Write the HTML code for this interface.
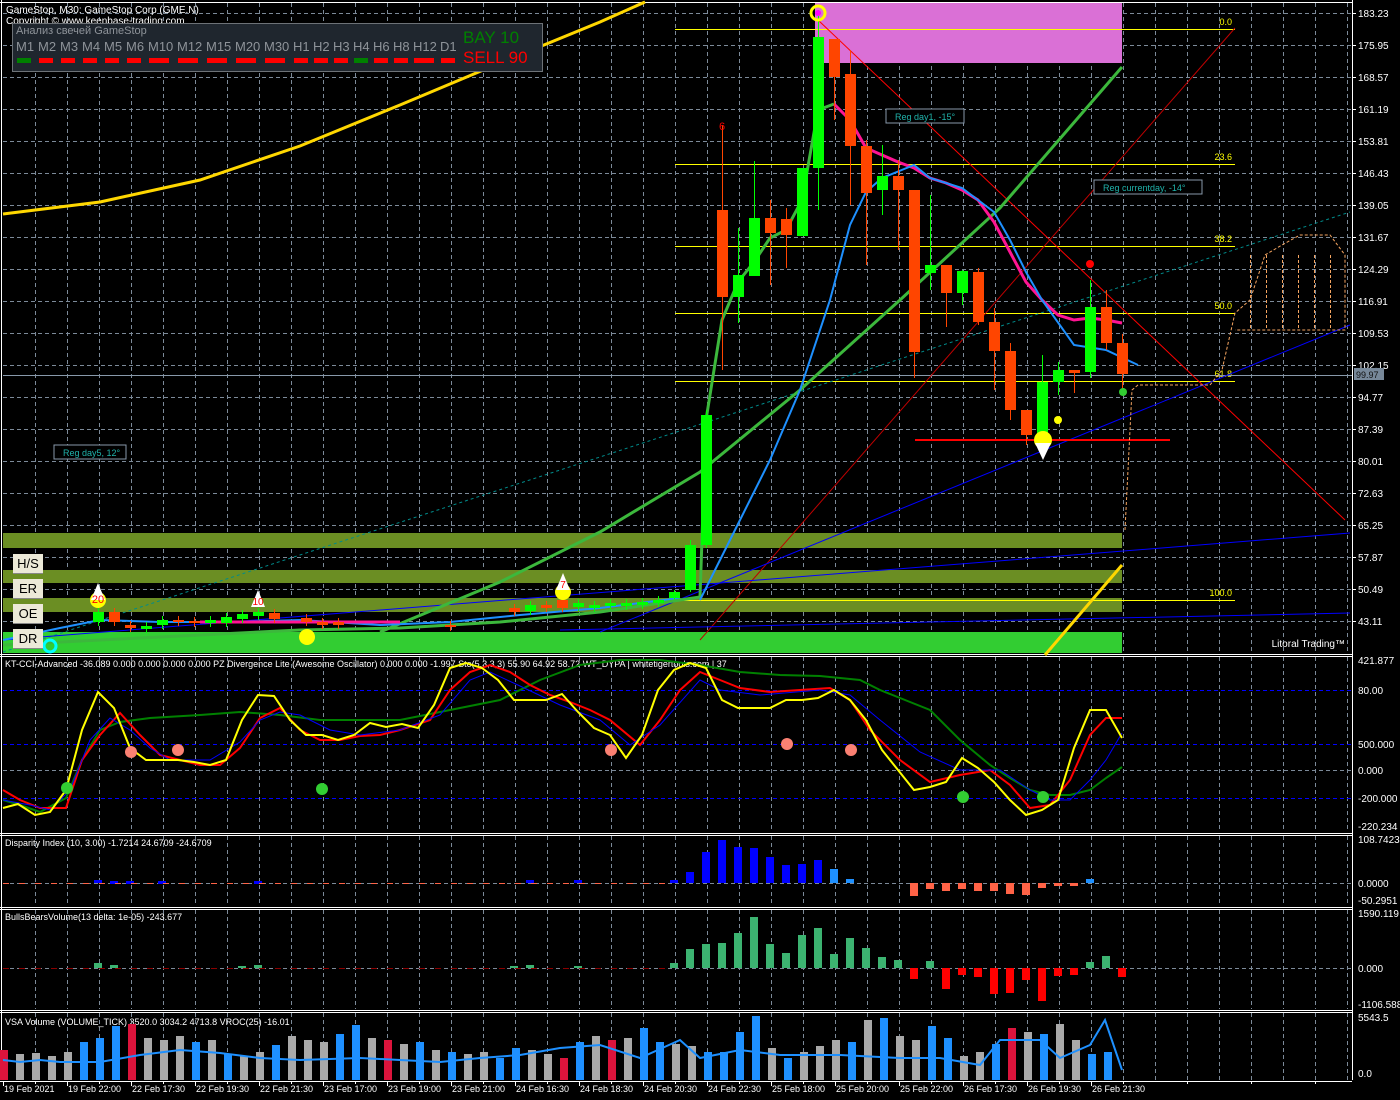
<!DOCTYPE html>
<html><head><meta charset="utf-8">
<style>
html,body{margin:0;padding:0;background:#000;width:1400px;height:1100px;overflow:hidden}
svg{display:block}
text{font-family:"Liberation Sans","Noto Sans CJK JP",sans-serif;}
</style></head>
<body>
<svg id="s" width="1400" height="1100" xmlns="http://www.w3.org/2000/svg"></svg>
<script>
var o='';
function a(s){o+=s;}
function L(x1,y1,x2,y2,c,w,d){if(y1==y2&&(w||1)==1){y1+=0.5;y2+=0.5;}if(x1==x2&&(w||1)==1){x1+=0.5;x2+=0.5;}a('<line x1="'+x1+'" y1="'+y1+'" x2="'+x2+'" y2="'+y2+'" stroke="'+c+'" stroke-width="'+(w||1)+'"'+(d?' stroke-dasharray="'+d+'"':'')+'/>');}
function R(x,y,w,h,c){a('<rect x="'+x+'" y="'+y+'" width="'+w+'" height="'+h+'" fill="'+c+'"/>');}
function P(pts,c,w,d){a('<polyline points="'+pts+'" fill="none" stroke="'+c+'" stroke-width="'+(w||1)+'"'+(d?' stroke-dasharray="'+d+'"':'')+'/>');}
function T(x,y,t,c,s,an){a('<text x="'+x+'" y="'+y+'" fill="'+c+'" font-size="'+(s||10)+'"'+(an?' text-anchor="'+an+'"':'')+'>'+t+'</text>');}
var G='#7c8a99';
var panels=[[3,653],[657,832],[836,906],[910,1009],[1013,1080]];
panels.forEach(function(p){
 for(var x=35;x<1352;x+=32)L(x,p[0],x,p[1],G,1,'4,3');
 L(0,p[0]-1,1352,p[0]-1,'#fff',1);L(0,p[1]+1,1352,p[1]+1,'#fff',1);
});
L(1352,0,1352,1080,'#fff',1);L(1,0,1,1080,'#fff',1);
var prices=['183.23','175.95','168.57','161.19','153.81','146.43','139.05','131.67','124.29','116.91','109.53','102.15','94.77','87.39','80.01','72.63','65.25','57.87','50.49','43.11'];
for(var i=0;i<20;i++){var y=13+32*i;L(3,y,1352,y,G,1,'4,3');L(1352,y,1356,y,'#fff');T(1358,y+4,prices[i],'#fff',10);}
R(3,533,1119,15,'#6b8e23');R(3,570,1119,13,'#6b8e23');R(3,598,1119,14,'#6b8e23');R(3,632,1119,21,'#32cd32');
R(815,3,307,60,'#da70d6');
[[29,'0.0'],[164,'23.6'],[246,'38.2'],[313,'50.0'],[381,'61.8'],[600,'100.0']].forEach(function(f){L(675,f[0],1235,f[0],'#ffff00',1);T(1232,f[0]-4,f[1],'#ffff00',9,'end');});
L(3,375,1352,375,'#8899aa',1);
R(1354,368,30,12,'#778899');T(1356,378,'99.97','#111',9);
L(818,20,1345,520,'#ff0000',1);L(700,640,1235,28,'#c00000',1);
L(3,652,1350,212,'#008b8b',1,'3,3');
L(600,632,1350,325,'#0000ff',1);L(3,640,1350,533,'#0000ff',1);L(560,630,1350,613,'#0000ff',1);
L(915,440,1170,440,'#ff0000',2);
P('3,214 100,202 200,180 300,146 400,105 500,63 600,22 645,2','#ffd700',3);
P('1045,655 1122,565','#ffd700',3);
P('380,632 500,582 600,532 700,472 800,390 900,300 1000,208 1122,67','#3cb83c',3);
P('3,640 60,628 100,620 160,622 230,622 300,620 380,625 450,622 520,615 600,608 680,598','#1e90ff',2);
P('3,645 100,640 200,635 300,630 400,628 500,622 600,612 680,600 700,597 706,420 722,320 738,282 754,262 770,238 786,230 802,200 818,110 834,104','#3cb83c',3);
P('200,622 400,622','#ff1493',3);
P('834,104 850,120 866,148 882,155 898,162 914,168 930,178 946,183 962,190 978,200 994,222 1010,252 1026,282 1042,300 1058,315 1074,320 1090,318 1106,320 1122,323','#ff1493',3);
P('700,600 740,520 770,460 800,390 830,300 850,225 866,192 882,178 914,165 930,178 962,188 994,212 1010,240 1026,272 1042,300 1074,345 1106,350 1138,365','#1e90ff',2);
P('1125,530 1132,390 1138,385 1210,385 1222,370 1235,313 1250,300 1265,255 1282,245 1300,235 1330,235 1345,255 1345,330 1235,330','#f4a460',1,'3,2');
for(var x=1250;x<1345;x+=16)L(x,255,x,330,'#f4a460',1,'3,2');
var C=[[674,598,592,590,600],[690,590,545,540,592],[706,545,415,410,548],[722,210,297,125,370],[738,297,275,228,323],[754,276,218,161,276],[770,218,233,200,285],[786,219,235,208,268],[802,236,168,168,236],[818,168,37,10,210],[834,39,77,39,120],[850,74,146,50,205],[866,146,193,140,265],[882,190,176,145,215],[898,176,190,160,250],[914,190,352,190,378],[930,273,265,195,290],[946,265,293,265,327],[962,293,271,270,305],[978,272,322,268,325],[994,322,351,308,390],[1010,351,410,343,420],[1026,410,435,410,445],[1042,435,382,355,440],[1058,382,370,362,395],[1074,370,373,370,393],[1090,372,307,280,378],[1106,307,343,290,350],[1122,343,374,334,390]];
C.forEach(function(c){var up=c[2]<c[1];var col=up?'#00ff00':'#ff4500';L(c[0],c[3],c[0],c[4],col,1);var t=Math.min(c[1],c[2]),h=Math.max(2,Math.abs(c[1]-c[2]));R(c[0]-5,t,11,h,col);});
var sc=[[98,'#00ff00',612,10],[114,'#ff4500',612,10],[130,'#ff4500',625,3],[146,'#00ff00',626,3],[162,'#00ff00',620,5],[178,'#ff4500',620,2],[194,'#ff4500',621,2],[210,'#00ff00',620,3],[226,'#00ff00',617,6],[242,'#00ff00',614,5],[258,'#00ff00',612,4],[274,'#ff4500',613,6],[306,'#ff4500',618,4],[322,'#ff4500',622,3],[338,'#ff4500',622,3],[450,'#ff4500',625,2],[514,'#ff4500',608,4],[530,'#00ff00',605,6],[546,'#ff4500',605,3],[562,'#ff4500',600,8],[578,'#00ff00',603,4],[594,'#00ff00',605,3],[610,'#00ff00',603,3],[626,'#00ff00',603,3],[642,'#00ff00',602,3],[658,'#00ff00',600,3]];
sc.forEach(function(c){R(c[0]-5,c[2],11,c[3],c[1]);L(c[0],c[2]-4,c[0],c[2]+c[3]+4,c[1]);});
a('<circle cx="818" cy="13" r="7" fill="none" stroke="#ffff00" stroke-width="3"/><circle cx="818" cy="13" r="3" fill="#ff00ff"/>');
a('<circle cx="1090" cy="264" r="4" fill="#ff0000"/><circle cx="1123" cy="392" r="4" fill="#32cd32"/><circle cx="1058" cy="420" r="4" fill="#ffff00"/><circle cx="1043" cy="440" r="9" fill="#ffff00"/>');
a('<polygon points="1035,443 1051,443 1043,460" fill="#fff"/>');
a('<circle cx="98" cy="600" r="8" fill="#ffff00"/><polygon points="98,583 91,600 105,600" fill="#fff"/>');
a('<circle cx="563" cy="592" r="8" fill="#ffff00"/><polygon points="563,573 556,590 570,590" fill="#fff"/>');
a('<polygon points="258,590 251,607 265,607" fill="#fff"/><circle cx="307" cy="637" r="8" fill="#ffff00"/><circle cx="50" cy="646" r="6" fill="none" stroke="#00ffff" stroke-width="3"/>');
T(98,603,'20','#ff0000',11,'middle');T(258,605,'10','#ff0000',10,'middle');T(563,588,'7','#ff0000',10,'middle');T(722,130,'6','#ff0000',11,'middle');
a('<rect x="886" y="109" width="78" height="14" fill="#000" stroke="#8899aa"/>');T(895,120,'Reg day1, -15°','#20b2aa',9);
a('<rect x="1094" y="180" width="108" height="14" fill="#000" stroke="#8899aa"/>');T(1103,191,'Reg currentday, -14°','#20b2aa',9);
a('<rect x="54" y="445" width="72" height="14" fill="#000" stroke="#8899aa"/>');T(63,456,'Reg day5, 12°','#20b2aa',9);
T(1345,647,'Litoral Trading™','#fff',10,'end');
['H/S','ER','OE','DR'].forEach(function(b,i){var y=554+25*i;R(13,y,30,19,'#ece9d8');L(13,y+19,43,y+19,'#888');T(28,y+14,b,'#000',13,'middle');});
T(6,13,'GameStop, M30:  GameStop Corp (GME.N)','#fff',10);T(6,24,'Copyright © www.keenbase-trading.com','#fff',10);
a('<rect x="12.5" y="23.5" width="530" height="48" fill="#1f262e" stroke="#6d7277"/>');
T(16,34,'Анализ свечей GameStop','#8e9399',11);
var tf=['M1','M2','M3','M4','M5','M6','M10','M12','M15','M20','M30','H1','H2','H3','H4','H6','H8','H12','D1'];
var xs=[16,38,60,82,104,126,148,177,206,235,264,293,313,333,353,373,393,413,440];
tf.forEach(function(t,i){T(xs[i],51,t,'#8e9399',13);var w=t.length>2?20:14;R(xs[i]+1,58,w,5,(i==0||i==14)?'#008000':'#ff0000');});
T(463,43,'BAY   10','#008000',17);T(463,63,'SELL 90','#ff0000',17);
T(5,667,'KT-CCI-Advanced -36.089 0.000 0.000 0.000 0.000 PZ Divergence Lite (Awesome Oscillator) 0.000 0.000 -1.997 Sto(5,3,3,3) 55.90 64.92 58.72 WT_DYPA | whitetigertools.com | 37','#fff',9);
[690,744,798].forEach(function(y){L(3,y,1352,y,'#0000ff',1,'4,3');});L(3,770,1352,770,G,1,'4,3');
T(1358,664,'421.877','#fff',10);T(1358,694,'80.00','#fff',10);T(1358,748,'500.000','#fff',10);T(1358,774,'0.000','#fff',10);T(1358,802,'-200.000','#fff',10);T(1358,830,'-220.234','#fff',10);
var ye='3,808 18,804 35,815 50,812 66,790 82,730 98,692 114,708 130,748 146,760 162,760 178,760 194,762 210,765 226,760 242,720 258,695 274,696 290,720 306,735 322,735 338,740 354,735 370,723 386,727 402,724 418,728 434,705 450,668 466,663 482,668 498,680 514,700 530,700 546,700 562,694 578,712 594,728 610,735 626,758 642,735 658,690 674,670 690,663 706,668 722,700 738,708 754,708 770,708 786,700 802,700 818,698 834,690 850,700 866,720 882,750 898,770 914,790 930,787 946,782 962,758 978,768 994,782 1010,800 1026,815 1042,810 1058,800 1074,748 1090,710 1106,710 1122,738';
var re='3,790 20,800 40,808 66,808 82,760 100,735 120,713 140,735 160,755 180,760 200,765 220,765 240,748 260,718 280,708 300,730 320,740 340,740 360,736 380,735 400,730 430,720 450,690 470,672 490,665 510,672 530,685 550,695 570,702 590,710 610,720 640,745 660,720 680,690 700,672 720,680 740,688 770,692 800,690 830,688 850,700 870,730 900,760 930,782 960,775 990,770 1010,785 1030,808 1050,805 1070,780 1090,735 1106,718 1122,718';
var gr='3,800 20,805 40,812 66,798 82,760 100,730 120,722 150,718 200,715 240,712 280,715 320,720 400,720 450,710 500,700 540,680 580,665 620,660 660,660 700,665 740,672 780,675 820,676 860,680 880,690 900,698 930,710 960,740 990,765 1010,778 1030,790 1050,795 1070,795 1090,790 1106,778 1122,767';
var bl='3,800 30,805 50,810 70,790 90,740 110,718 130,730 150,748 170,760 210,760 240,742 260,720 280,712 300,715 330,730 360,735 400,730 440,715 470,680 490,672 520,686 560,705 600,720 630,745 660,725 700,680 720,690 760,695 820,690 850,695 880,720 920,752 960,770 1000,770 1030,790 1050,800 1070,800 1090,780 1106,760 1122,733';
P(gr,'#008000',2);P(re,'#ff0000',2);P(bl,'#0000ff',1);P(ye,'#ffff00',2);
[[131,752,'#fa8072'],[178,750,'#fa8072'],[611,750,'#fa8072'],[787,744,'#fa8072'],[851,750,'#fa8072'],[67,788,'#32cd32'],[322,789,'#32cd32'],[963,797,'#32cd32'],[1043,797,'#32cd32']].forEach(function(c){a('<circle cx="'+c[0]+'" cy="'+c[1]+'" r="6" fill="'+c[2]+'"/>');});
T(5,846,'Disparity Index (10, 3.00) -1.7214 24.6709 -24.6709','#fff',9);
L(3,883,1352,883,G,1,'4,3');
T(1358,843,'108.7423','#fff',10);T(1358,887,'0.0000','#fff',10);T(1358,904,'-50.2951','#fff',10);
var dp=[[674,880],[690,872],[706,852],[722,840],[738,847],[754,848],[770,857],[786,865],[802,864],[818,860],[834,869,1],[850,879,1],[1090,879,1]];
dp.forEach(function(d){R(d[0]-4,d[1],8,883-d[1],d[2]?'#1e90ff':'#0000ff');});
[[98,880],[114,881],[130,881],[162,881],[258,881],[530,880],[578,880]].forEach(function(d){R(d[0]-4,d[1],8,3,'#0000ff');});
[[914,896],[930,889],[946,891],[962,889],[978,891],[994,891],[1010,894],[1026,895],[1042,888],[1058,886],[1074,886]].forEach(function(d){R(d[0]-4,883,8,d[1]-883,'#ff6347');});
for(var x=3;x<660;x+=16)R(x,883,6,1,'#ff6347');
T(5,920,'BullsBearsVolume(13  delta: 1e-05)  -243.677','#fff',9);
L(3,968,1352,968,G,1,'4,3');
T(1358,917,'1590.119','#fff',10);T(1358,972,'0.000','#fff',10);T(1358,1008,'-1106.588','#fff',10);
[[674,963],[690,949],[706,944],[722,943],[738,933],[754,917],[770,944],[786,953],[802,935],[818,928],[834,954],[850,938],[866,948],[882,957],[898,960],[930,961],[1090,962],[1106,956],[98,963],[114,965],[242,966],[258,965],[514,966],[530,965],[578,966]].forEach(function(d){R(d[0]-4,d[1],8,968-d[1],'#3cb371');});
[[914,979],[946,989],[962,975],[978,977],[994,994],[1010,993],[1026,980],[1042,1001],[1058,976],[1074,975],[1122,977]].forEach(function(d){R(d[0]-4,968,8,d[1]-968,'#ff0000');});
for(var x=3;x<660;x+=16)R(x,968,6,1,'#8b0000');
T(5,1025,'VSA Volume (VOLUME_TICK) 3520.0 3034.2 4713.8 VROC(25) -16.01','#fff',9);
T(1358,1021,'5543.5','#fff',10);T(1358,1077,'0.0','#fff',10);
var vh=[30,26,27,24,28,38,42,54,56,42,40,44,38,40,26,24,28,35,44,40,38,46,55,42,40,36,38,30,28,26,28,22,32,30,26,22,38,44,40,42,52,38,36,34,28,28,48,64,32,22,28,34,40,38,60,62,44,40,54,42,24,28,36,52,48,46,56,40,26,28];
var vc='rggggbbbrgggbgbggbgggbbgrgbgbggbbggrbgrgbbggbbbbgbgggbgbggbbggbrgbggbb';
for(var i=0;i<vh.length;i++){var x=0+i*16;var c=vc[i]=='b'?'#1e90ff':vc[i]=='r'?'#dc143c':'#a9a9a9';R(x,1080-vh[i],8,vh[i],c);}
P('3,1060 20,1062 40,1060 60,1062 100,1062 140,1055 180,1050 220,1053 260,1058 300,1060 360,1058 400,1060 440,1062 480,1058 520,1055 560,1048 600,1045 640,1058 680,1040 700,1058 740,1050 780,1055 800,1055 840,1055 900,1058 940,1058 980,1065 1000,1040 1040,1040 1060,1058 1090,1045 1105,1020 1122,1070','#1e90ff',2);
var tl=['19 Feb 2021','19 Feb 22:00','22 Feb 17:30','22 Feb 19:30','22 Feb 21:30','23 Feb 17:00','23 Feb 19:00','23 Feb 21:00','24 Feb 16:30','24 Feb 18:30','24 Feb 20:30','24 Feb 22:30','25 Feb 18:00','25 Feb 20:00','25 Feb 22:00','26 Feb 17:30','26 Feb 19:30','26 Feb 21:30'];
L(0,1081,1352,1081,'#fff',1);
tl.forEach(function(t,i){var x=3+64*i;L(x,1081,x,1086,'#fff');T(x+1,1092,t,'#fff',9);});
for(var x=35;x<1352;x+=64)L(x,1081,x,1084,'#fff');
document.getElementById('s').innerHTML=o;
</script>
</body></html>
